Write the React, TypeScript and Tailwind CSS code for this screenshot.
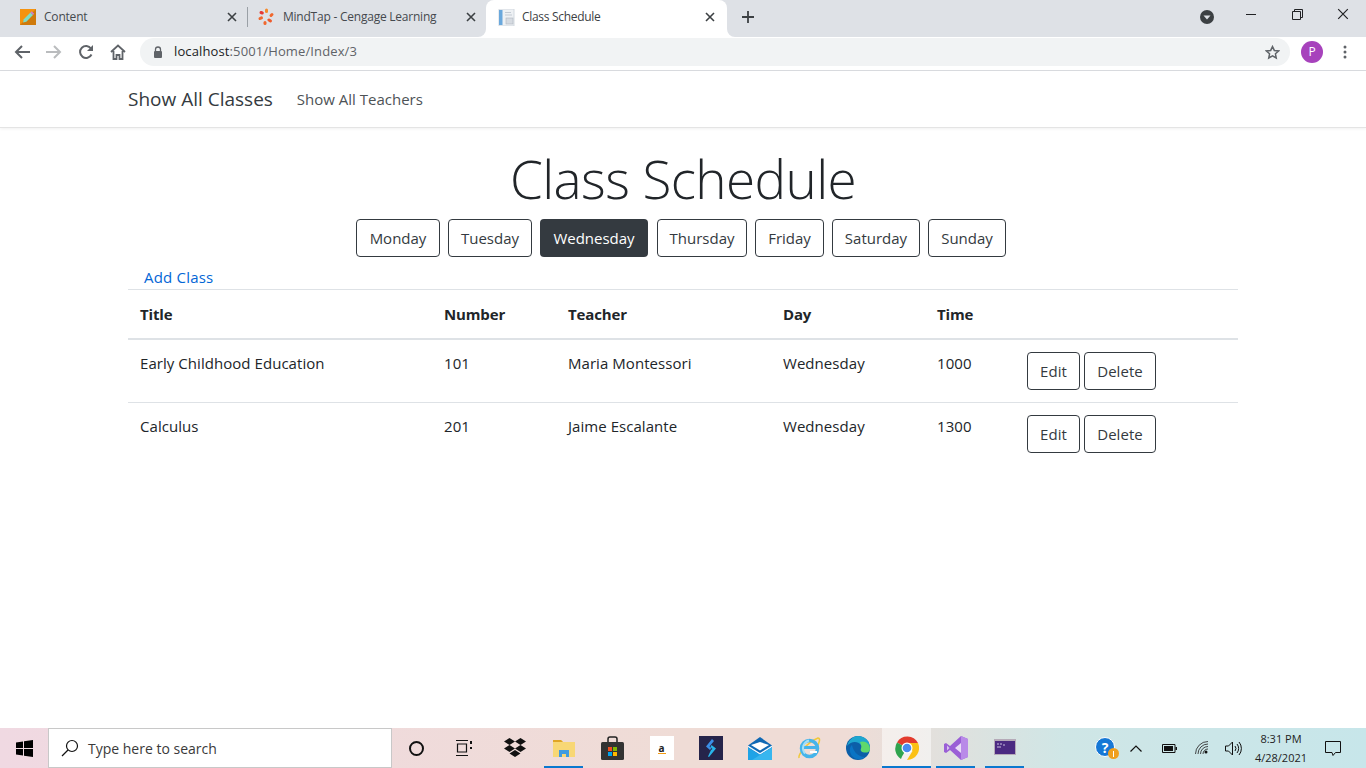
import { ReactNode } from "react";

const days = [
  { name: "Monday", width: "w-[84px]" },
  { name: "Tuesday", width: "w-[84px]" },
  { name: "Wednesday", width: "w-[108px]", active: true },
  { name: "Thursday", width: "w-[90px] ml-px" },
  { name: "Friday", width: "w-[69px]" },
  { name: "Saturday", width: "w-[88px]" },
  { name: "Sunday", width: "w-[78px]" },
];

const classes = [
  { title: "Early Childhood Education", number: "101", teacher: "Maria Montessori", day: "Wednesday", time: "1000" },
  { title: "Calculus", number: "201", teacher: "Jaime Escalante", day: "Wednesday", time: "1300" },
];

function CloseIcon({ size = 10, color = "#3c4043", stroke = 1.6 }: { size?: number; color?: string; stroke?: number }) {
  return (
    <svg width={size} height={size} viewBox="0 0 10 10">
      <path d="M1 1l8 8M9 1l-8 8" stroke={color} strokeWidth={stroke} fill="none" />
    </svg>
  );
}

function ContentFavicon() {
  return (
    <svg width="16" height="16" viewBox="0 0 16 16">
      <rect width="16" height="16" fill="#f5930f" />
      <path d="M0 16L16 0v16z" fill="#cf7a0c" />
      <path d="M3 13.500l.8-3.300 6.700-6.700 2.500 2.500-6.700 6.700z" fill="#7fdcc4" />
      <path d="M10.500 3.500l1.200-1.200 2.500 2.500L13 6z" fill="#c77fd6" />
    </svg>
  );
}

function MindTapFavicon() {
  return (
    <svg width="18" height="18" viewBox="0 0 18 18" fill="none" strokeWidth="3" strokeLinecap="round">
      <path d="M9.500 2v1.500" stroke="#f58a2c" />
      <path d="M15 6.500l-1 1" stroke="#f0682e" />
      <path d="M13.500 13l-1.500-1" stroke="#ee5a2c" />
      <path d="M8 15.500v-1" stroke="#f0682e" />
      <path d="M3 10.500l1.500-.7" stroke="#f0682e" />
      <path d="M4 4.500l1.300.5" stroke="#e53935" />
    </svg>
  );
}

function DocFavicon() {
  return (
    <svg width="17" height="17" viewBox="0 0 17 17">
      <rect x="1" y="0" width="15" height="17" fill="#eef1f4" stroke="#d3d9e0" />
      <rect x="1" y="1" width="3.500" height="15" fill="#6aa8dc" />
      <path d="M7 3.500h6M7 6h7" stroke="#c3cad3" />
      <rect x="8" y="9" width="7" height="6" fill="#d6dbe1" stroke="#aeb6bf" strokeWidth=".6" />
    </svg>
  );
}

function TabStrip() {
  return (
    <div className="flex h-[37px] bg-[#dee1e6]">
      <div className="flex h-full w-[247px] items-center pb-[3px] pl-5 pr-[10px]">
        <span className="flex w-[24px] shrink-0 items-center"><ContentFavicon /></span>
        <span className="flex-1 truncate text-[12px] tracking-[-0.2px] text-[#45494e]">Content</span>
        <CloseIcon />
      </div>
      <div className="mb-[10px] mt-[7px] w-px bg-[#9aa0a6]" />
      <div className="flex h-full w-[238px] items-center pb-[3px] pl-[9px] pr-[10px]">
        <span className="flex w-[26px] shrink-0 items-center"><MindTapFavicon /></span>
        <span className="flex-1 truncate text-[12px] tracking-[-0.23px] text-[#45494e]">MindTap - Cengage Learning</span>
        <CloseIcon />
      </div>
      <div className="relative flex h-full w-[241px] items-center rounded-t-lg bg-white pb-[3px] pl-3 pr-3">
        <svg className="absolute bottom-0 left-[-8px]" width="8" height="8" viewBox="0 0 8 8">
          <path d="M8 0v8H0a8 8 0 0 0 8-8z" fill="#fff" />
        </svg>
        <svg className="absolute bottom-0 right-[-8px]" width="8" height="8" viewBox="0 0 8 8">
          <path d="M0 0v8h8a8 8 0 0 1-8-8z" fill="#fff" />
        </svg>
        <span className="flex w-[24px] shrink-0 items-center"><DocFavicon /></span>
        <span className="flex-1 truncate text-[12px] tracking-[-0.3px] text-[#3c4043]">Class Schedule</span>
        <CloseIcon />
      </div>
      <div className="ml-[14px] flex w-[14px] items-center pb-[3px]">
        <svg width="14" height="14" viewBox="0 0 14 14">
          <path d="M7 1v12M1 7h12" stroke="#3c4043" strokeWidth="1.800" />
        </svg>
      </div>
      <div className="flex-1" />
      <div className="flex items-start pr-[17px]">
        <svg className="mt-[10px]" width="14" height="14" viewBox="0 0 14 14">
          <circle cx="7" cy="7" r="7" fill="#3c4043" />
          <path d="M3.500 5.500h7L7 9.500z" fill="#dee1e6" />
        </svg>
        <div className="ml-[32px] mt-[14px] h-px w-[10px] bg-[#202124]" />
        <svg className="ml-[36px] mt-[9px]" width="11" height="11" viewBox="0 0 11 11" fill="none" stroke="#202124">
          <path d="M.5 2.500h8v8h-8zM2.500 2.500v-2h8v8h-2" />
        </svg>
        <span className="ml-[34px] mt-[8px] flex"><CloseIcon size={12} color="#202124" stroke={1} /></span>
      </div>
    </div>
  );
}

function Toolbar() {
  return (
    <div className="flex h-[34px] items-center border-b border-[#dadce0] bg-white pb-[3px]">
      <svg className="ml-[14px]" width="16" height="14" viewBox="0 0 16 14" fill="none" stroke="#5f6368" strokeWidth="2">
        <path d="M16 7H2M8 1L2 7l6 6" />
      </svg>
      <svg className="ml-[16px]" width="16" height="14" viewBox="0 0 16 14" fill="none" stroke="#babcbe" strokeWidth="2">
        <path d="M0 7h14M8 1l6 6-6 6" />
      </svg>
      <svg className="ml-[16px]" width="16" height="16" viewBox="0 0 16 16" fill="none">
        <path d="M13.500 10.500a6 6 0 1 1-.5-6" stroke="#5f6368" strokeWidth="2" />
        <path d="M15 1v6H9z" fill="#5f6368" />
      </svg>
      <svg className="ml-[16px]" width="16" height="16" viewBox="0 0 16 16" fill="none" stroke="#5f6368" strokeWidth="1.800">
        <path d="M1 8l7-6.500L15 8M3.500 7v8h3v-4h3v4h3V7" />
      </svg>
      <div className="ml-[14px] flex h-[28px] flex-1 items-center rounded-full bg-[#f1f3f4] pl-[13px] pr-[10px]">
        <svg width="10" height="13" viewBox="0 0 10 13">
          <path d="M2.500 5V3.500a2.500 2.500 0 0 1 5 0V5" stroke="#5f6368" strokeWidth="1.300" fill="none" />
          <rect x="1" y="5" width="8" height="7" rx="1" fill="#5f6368" />
        </svg>
        <span className="ml-[11px] flex-1 text-[13px] tracking-[0.12px] text-[#5f6368]">
          <span className="text-[#202124]">localhost</span>:5001/Home/Index/3
        </span>
        <svg width="15" height="15" viewBox="0 0 24 24" fill="none" stroke="#5f6368" strokeWidth="2.400">
          <path d="M12 2.500l2.900 6.200 6.800.8-5 4.600 1.300 6.700-6-3.400-6 3.400 1.300-6.700-5-4.600 6.800-.8z" />
        </svg>
      </div>
      <div className="ml-[11px] flex h-[22px] w-[22px] items-center justify-center rounded-full bg-[#a742bc] text-[12px] text-white">P</div>
      <svg className="ml-[20px] mr-[19px]" width="4" height="14" viewBox="0 0 4 14" fill="#5f6368">
        <circle cx="2" cy="2" r="1.500" />
        <circle cx="2" cy="7" r="1.500" />
        <circle cx="2" cy="12" r="1.500" />
      </svg>
    </div>
  );
}

function OutlineButton({ children, className }: { children: ReactNode; className: string }) {
  return (
    <button className={`h-[38px] rounded border border-[#343a40] pt-px text-center text-[#343a40] ${className}`}>
      {children}
    </button>
  );
}

function AppIcon({ children, active, underline }: { children: ReactNode; active?: boolean; underline?: boolean }) {
  return (
    <div className={`relative flex h-[40px] w-[49px] shrink-0 items-center justify-center ${active ? "bg-white/50" : ""}`}>
      {children}
      {underline && (
        <div className={`absolute bottom-0 h-[2px] bg-[#0a78cf] ${active ? "inset-x-0" : "inset-x-[5px]"}`} />
      )}
    </div>
  );
}

function Taskbar() {
  return (
    <div className="flex h-[40px] items-center bg-[linear-gradient(90deg,#f0d9e2_0%,#efdcd6_50%,#efdcd6_62%,#cfe6e6_78%,#c7e6ea_100%)] text-black">
      <div className="flex w-[48px] justify-center">
        <svg width="17" height="17" viewBox="0 0 17 17" fill="#000">
          <path d="M0 2.500l7-1v6.500H0zM8 1.300L17 0v8H8zM0 9h7v6.500l-7-1zM8 9h9v8l-9-1.300z" />
        </svg>
      </div>
      <div className="flex h-[40px] w-[344px] items-center border border-[#c8c8c8] bg-white pl-[12px]">
        <svg width="18" height="18" viewBox="0 0 18 18" fill="none" stroke="#111" strokeWidth="1.200">
          <circle cx="11" cy="7" r="5.500" />
          <path d="M7 11l-6 6" />
        </svg>
        <span className="ml-[9px] text-[14px] text-[#3a3a3a]">Type here to search</span>
      </div>
      <AppIcon>
        <div className="h-[15px] w-[15px] rounded-full border-2 border-[#111]" />
      </AppIcon>
      <AppIcon>
        <svg className="mr-[2px]" width="18" height="18" viewBox="0 0 18 18" fill="none" stroke="#111" strokeWidth="1.200">
          <path d="M0 1.500h12M0 16.500h12M1.500 5h9v8h-9z" />
          <path d="M15 2v3M15 8v2" strokeWidth="2" />
        </svg>
      </AppIcon>
      <AppIcon>
        <svg width="24" height="22" viewBox="0 0 24 22" fill="#111">
          <path d="M6.500 1L12 4.500 6.500 8 1 4.500zM17.500 1L23 4.500 17.500 8 12 4.500zM6.500 8L12 11.500 6.500 15 1 11.500zM17.500 8L23 11.500 17.500 15 12 11.500zM12 13l5.500 3.500L12 20l-5.500-3.500z" />
        </svg>
      </AppIcon>
      <AppIcon underline>
        <svg width="22" height="18" viewBox="0 0 22 18">
          <path d="M0 1h8l2 2h12v15H0z" fill="#f8d775" />
          <path d="M0 1h8l2 2H0z" fill="#e0a526" />
          <path d="M6 18v-7h10v7h-3v-3H9v3z" fill="#3f9be0" />
        </svg>
      </AppIcon>
      <AppIcon>
        <svg width="23" height="24" viewBox="0 0 23 24">
          <path d="M7 7V3a2 2 0 0 1 2-2h5a2 2 0 0 1 2 2v4" stroke="#222" strokeWidth="1.500" fill="none" />
          <rect y="6" width="23" height="18" rx="1.500" fill="#333" />
          <rect x="7" y="11" width="4" height="4" fill="#f25022" />
          <rect x="12" y="11" width="4" height="4" fill="#7fba00" />
          <rect x="7" y="16" width="4" height="4" fill="#00a4ef" />
          <rect x="12" y="16" width="4" height="4" fill="#ffb900" />
        </svg>
      </AppIcon>
      <AppIcon>
        <div className="flex h-[24px] w-[24px] flex-col items-center justify-center bg-white text-[10px] leading-none text-[#222]">
          <span className="font-bold">a</span>
          <div className="h-px w-[8px] bg-[#f39c12]" />
        </div>
      </AppIcon>
      <AppIcon>
        <div className="flex h-[24px] w-[24px] items-center justify-center bg-[#25244a]">
          <svg width="10" height="18" viewBox="0 0 10 18">
            <path d="M6 0L0 7.500 4 11l1.500-2L3.500 7.500 8 2z" fill="#3b8fe8" />
            <path d="M5.500 6L10 9.500 3 18l-1-.5L5 11l1.500-1L4.500 8z" fill="#28b4ea" />
          </svg>
        </div>
      </AppIcon>
      <AppIcon>
        <svg width="24" height="23" viewBox="0 0 24 23">
          <path d="M0 8.500L12 0l12 8.500V23H0z" fill="#0f68b4" />
          <path d="M0 8.500L12 16l12-7.500v1.800L12 17.800 0 10.300z" fill="#eaf6fd" />
          <path d="M3 8l9-3 9 3-9 5.500z" fill="#fff" />
          <path d="M0 10.300l12 7.500 12-7.500V23H0z" fill="#1fa3e6" />
          <path d="M24 10.300V23H4z" fill="#37b6ef" />
        </svg>
      </AppIcon>
      <AppIcon>
        <svg width="24" height="24" viewBox="0 0 24 24" fill="none">
          <path d="M2 22C1 19 9 7 21 2c2 0 2 3 0 7" stroke="#f0c93c" strokeWidth="1.600" />
          <circle cx="12.500" cy="12.500" r="8" stroke="#45b4ea" strokeWidth="3.500" />
          <path d="M6 11.500h13" stroke="#45b4ea" strokeWidth="3" />
          <path d="M20 16h-7" stroke="#fff" strokeWidth="2" />
          <path d="M12 4.500a8 8 0 0 0-4 13" stroke="#a5e0f8" strokeWidth="2" />
        </svg>
      </AppIcon>
      <AppIcon>
        <svg width="24" height="24" viewBox="0 0 24 24">
          <circle cx="12" cy="12" r="12" fill="#0c5fa8" />
          <path d="M1 10C3 3 8 0 12 0c7 0 12 5 12 12-6-6-9-5-9-3-3-4-10-4-14 1z" fill="#1ea6cf" />
          <path d="M14 6c5-2 10 2 10 7 0 3-3 4-6 3.500-3-.5-4-2.500-3-4 1-2-.5-5-1-6.500z" fill="#5fd86c" />
          <path d="M7 21c-4-4-4-10-1-12 1 5 5 12 13 12-4 3-8 3-12 0z" fill="#0a74c4" />
        </svg>
      </AppIcon>
      <AppIcon active underline>
        <svg width="24" height="24" viewBox="0 0 24 24">
          <path d="M12 12L2 6.500A12 12 0 0 1 23 7H12z" fill="#e33b2e" />
          <path d="M12 12l-5 8.500-1 2.500A12 12 0 0 1 2 6.500z" fill="#2fa44f" />
          <path d="M12 7h11a12 12 0 0 1-11 17l5.500-9z" fill="#fbc116" />
          <circle cx="12" cy="12" r="5.500" fill="#fff" />
          <circle cx="12" cy="12" r="4.300" fill="#4a8bf0" />
        </svg>
      </AppIcon>
      <AppIcon underline>
        <svg width="24" height="24" viewBox="0 0 24 24">
          <path d="M17 0l7 3v18l-7 3-11-10-4 3-2-1V8l2-1 4 3z" fill="#9a5fd6" />
          <path d="M17 0l7 3v18l-7 3z" fill="#b98ae8" />
          <path d="M17 7l-6 5 6 5z" fill="#e9dcf7" />
          <path d="M3 9.500v5l2.500-2.500z" fill="#d8c4ee" />
        </svg>
      </AppIcon>
      <AppIcon underline>
        <svg width="22" height="18" viewBox="0 0 22 18">
          <rect width="22" height="16" fill="#b5aab8" />
          <rect x="1" y="2" width="20" height="13" fill="#4b2a82" />
          <path d="M3 5h2M6 5h2M3 8h4M9 6h2" stroke="#c9bfe0" />
        </svg>
      </AppIcon>
      <div className="flex-1" />
      <div className="relative mr-[11px] h-[22px] w-[24px]">
        <div className="flex h-[20px] w-[20px] items-center justify-center rounded-full border border-white bg-[#1678d6] text-[14px] font-bold text-white">?</div>
        <div className="absolute bottom-0 right-0 flex h-[11px] w-[11px] items-center justify-center rounded-full bg-[#f0a020]">
          <div className="h-[6px] w-px bg-white" />
        </div>
      </div>
      <svg width="12" height="7" viewBox="0 0 12 7" fill="none" stroke="#111" strokeWidth="1.200">
        <path d="M.5 6.500L6 1l5.500 5.500" />
      </svg>
      <svg className="ml-[20px]" width="15" height="9" viewBox="0 0 15 9">
        <path d="M.5.500h12.500v8H.5z" fill="none" stroke="#111" />
        <rect x="2" y="2" width="9" height="5" fill="#111" />
        <rect x="13.500" y="3" width="1.500" height="3" fill="#111" />
      </svg>
      <svg className="ml-[18px]" width="14" height="14" viewBox="0 0 14 14" fill="none" stroke="#333" strokeWidth=".9">
        <path d="M.5 13A12.500 12.500 0 0 1 13 .5M3 13A10 10 0 0 1 13 3M5.500 13A7.500 7.500 0 0 1 13 5.500M8 13a5 5 0 0 1 5-5" />
        <circle cx="11" cy="11" r="1.500" fill="#111" stroke="none" />
      </svg>
      <svg className="ml-[16px]" width="17" height="15" viewBox="0 0 17 15" fill="none" stroke="#111">
        <path d="M.5 5h3l4-4v13l-4-4h-3z" />
        <path d="M10 5a4 4 0 0 1 0 5M12 3a7 7 0 0 1 0 9M14 1a10 10 0 0 1 0 13" />
      </svg>
      <div className="ml-[8px] flex w-[62px] flex-col items-center text-[11px] leading-[19px] text-[#222]">
        <span>8:31 PM</span>
        <span>4/28/2021</span>
      </div>
      <svg className="ml-[13px] mr-[25px]" width="16" height="16" viewBox="0 0 16 16" fill="none" stroke="#111">
        <path d="M.5 1.500h15v11h-5l-2.500 3-1-3H.5z" />
      </svg>
    </div>
  );
}

export default function App() {
  return (
    <div className="flex h-[768px] w-[1366px] flex-col overflow-hidden bg-white font-['Open_Sans','Noto_Sans',sans-serif] text-[#212529]">
      <TabStrip />
      <Toolbar />

      <nav className="flex h-[57px] items-center border-b border-[#e4e4e4] pl-[128px] shadow-[0_1px_3px_rgba(0,0,0,0.06)]">
        <a className="pt-px text-[19px] text-[#343a40]">Show All Classes</a>
        <a className="ml-[24px] text-[15px] text-[#4d5256]">Show All Teachers</a>
      </nav>

      <main className="mx-auto w-[1110px] flex-1">
        <h1 className="mt-[13px] mb-[2px] h-[76px] text-center text-[53px] font-light leading-[76px] tracking-[-0.6px]">Class Schedule</h1>

        <div className="flex justify-center gap-2 pr-[4px]">
          {days.map((d) =>
            d.active ? (
              <button key={d.name} className={`h-[38px] rounded bg-[#343a40] text-[15px] text-white ${d.width}`}>
                {d.name}
              </button>
            ) : (
              <OutlineButton key={d.name} className={`text-[15px] ${d.width}`}>
                {d.name}
              </OutlineButton>
            )
          )}
        </div>

        <div className="mt-[8px] h-[24px] pl-[16px]">
          <a className="text-[15px] leading-[24px] tracking-[0.2px] text-[#0366d6]">Add Class</a>
        </div>

        <table className="w-full table-fixed border-collapse text-[15px] tracking-[0.05px]">
          <thead>
            <tr className="border-y border-[#dee2e6] border-b-2 text-left tracking-[-0.15px]">
              <th className="h-[49px] w-[304px] px-3 font-bold">Title</th>
              <th className="w-[124px] px-3 font-bold">Number</th>
              <th className="w-[215px] px-3 font-bold">Teacher</th>
              <th className="w-[154px] px-3 font-bold">Day</th>
              <th className="w-[90px] px-3 font-bold">Time</th>
              <th className="px-3" />
            </tr>
          </thead>
          <tbody>
            {classes.map((c, i) => (
              <tr key={c.number} className={i === 0 ? "border-b border-[#dee2e6]" : ""}>
                <td className="px-3 pb-[27px] pt-[11px] align-top leading-[24px]">{c.title}</td>
                <td className="px-3 pb-[27px] pt-[11px] align-top leading-[24px]">{c.number}</td>
                <td className="px-3 pb-[27px] pt-[11px] align-top leading-[24px]">{c.teacher}</td>
                <td className="px-3 pb-[27px] pt-[11px] align-top leading-[24px]">{c.day}</td>
                <td className="px-3 pb-[27px] pt-[11px] align-top leading-[24px]">{c.time}</td>
                <td className="h-[62px] px-3 align-top pt-[12px]">
                  <div className="flex gap-1">
                    <OutlineButton className="w-[53px]">Edit</OutlineButton>
                    <OutlineButton className="w-[72px]">Delete</OutlineButton>
                  </div>
                </td>
              </tr>
            ))}
          </tbody>
        </table>
      </main>

      <Taskbar />
    </div>
  );
}
